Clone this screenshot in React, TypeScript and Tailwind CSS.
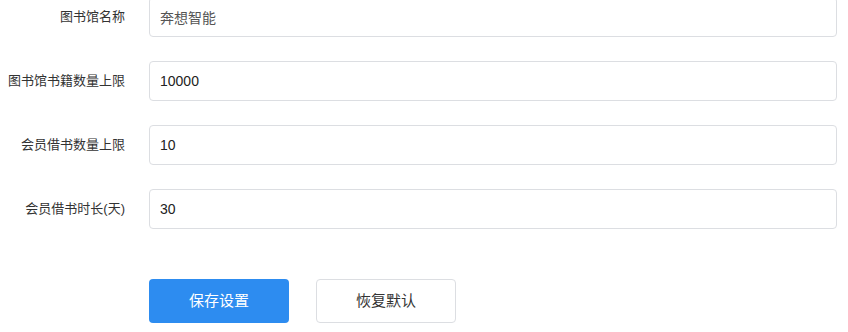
const rows = [
  { label: "图书馆名称", value: "奔想智能", muted: true },
  { label: "图书馆书籍数量上限", value: "10000" },
  { label: "会员借书数量上限", value: "10" },
  { label: "会员借书时长(天)", value: "30" },
];

export default function App() {
  return (
    <div
      className="h-[332px] w-[848px] overflow-hidden bg-white"
      style={{ fontFamily: '"Liberation Sans", "Noto Sans CJK SC", sans-serif' }}
    >
      <div className="mt-[-3px] flex flex-col gap-6 pr-[11px]">
        {rows.map((r) => (
          <div key={r.label} className="flex items-center">
            <label className="w-[125px] shrink-0 text-right text-[13px] text-[#333]">{r.label}</label>
            <input
              readOnly
              value={r.value}
              className={`ml-6 h-10 flex-1 rounded border border-[#dcdee2] px-[10px] text-[14px] outline-none ${
                r.muted ? "text-[#555]" : "text-[#222]"
              }`}
            />
          </div>
        ))}
      </div>
      <div className="mt-[50px] flex gap-[27px] pl-[149px]">
        <button className="h-[44px] w-[140px] rounded bg-[#2d8cf0] text-[15px] text-white">保存设置</button>
        <button className="h-[44px] w-[140px] rounded border border-[#dcdee2] bg-white text-[15px] text-[#333]">
          恢复默认
        </button>
      </div>
    </div>
  );
}
